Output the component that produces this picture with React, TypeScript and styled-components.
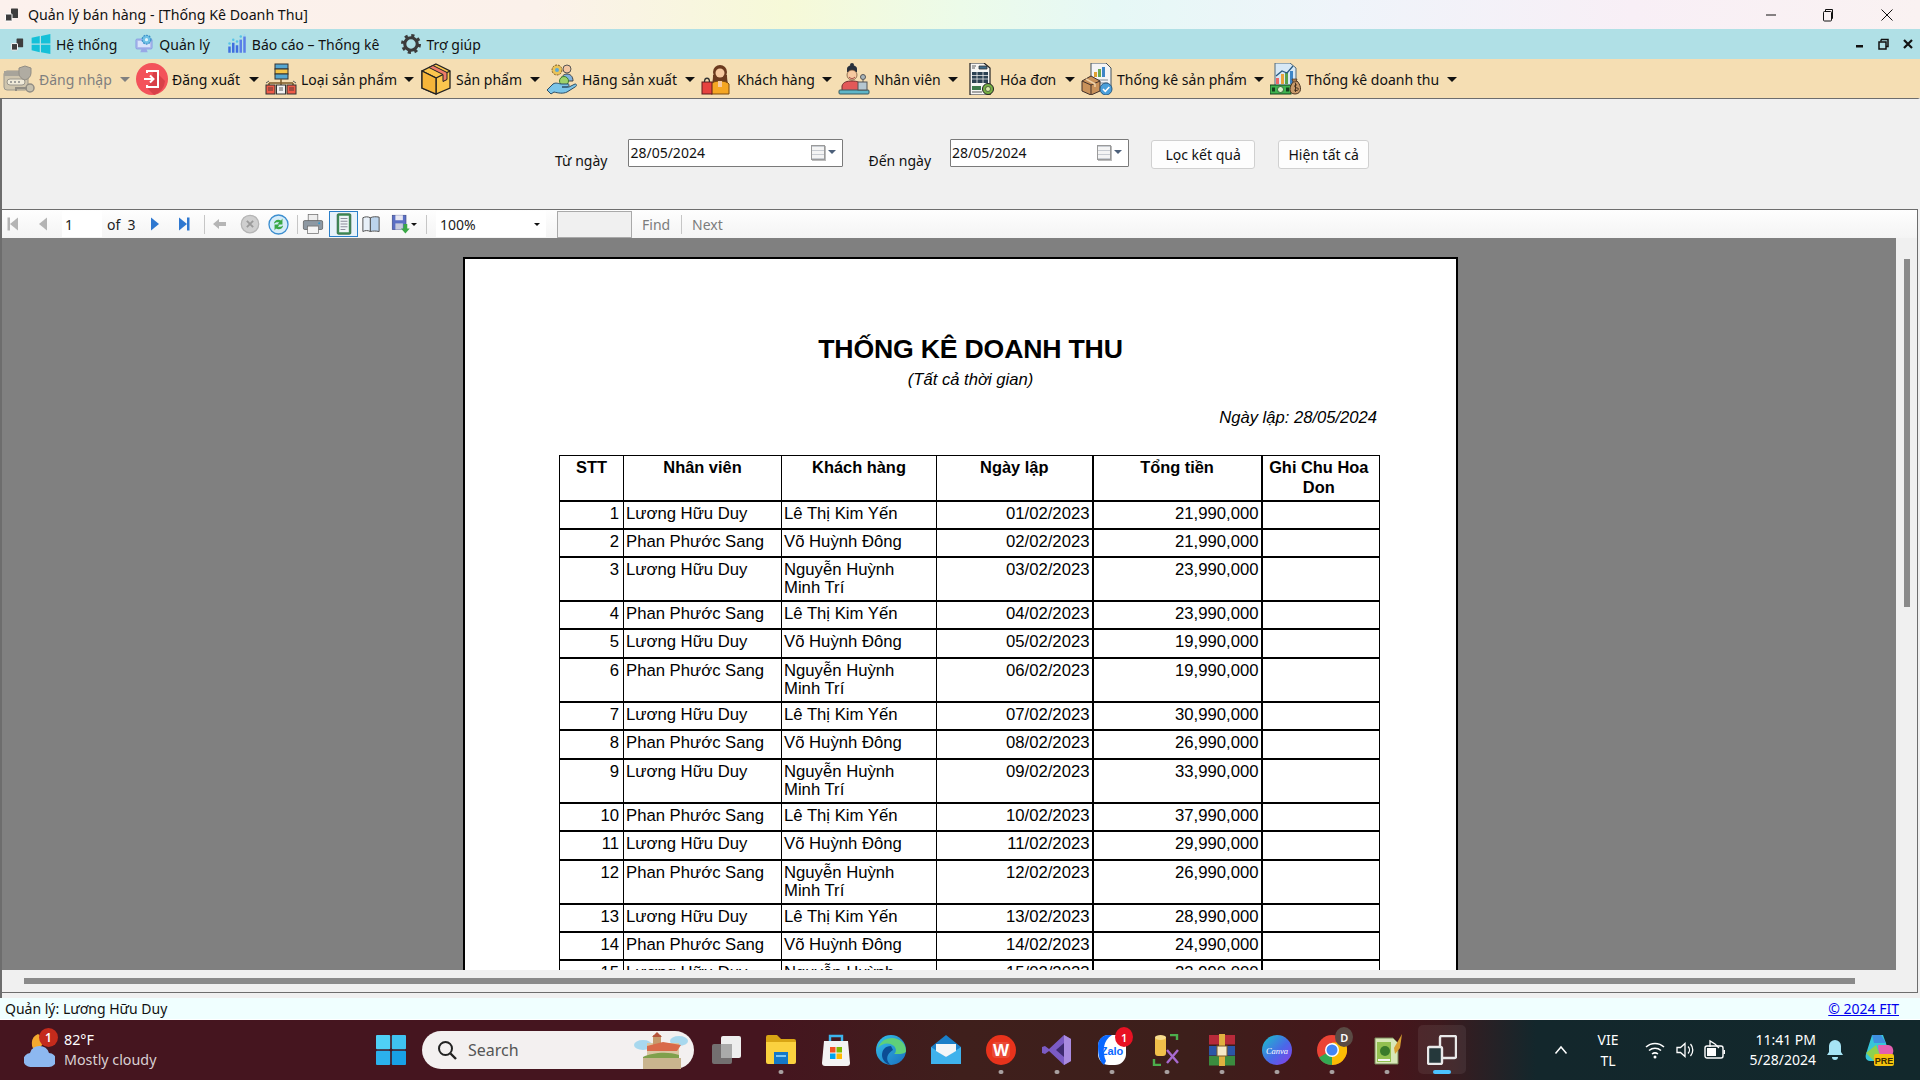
import React from "react";
import styled, { createGlobalStyle } from "styled-components";

const Global = createGlobalStyle`
  html, body { margin: 0; padding: 0; width: 1920px; height: 1080px; overflow: hidden; background: #f0f0f0; }
  #root { width: 1920px; height: 1080px; }
  * { box-sizing: border-box; }
`;

const UI = `"Noto Sans", "Open Sans", sans-serif`;
const Win = styled.div`width:1920px;height:1080px;display:flex;flex-direction:column;font-family:${UI};color:#111;overflow:hidden;`;

const TitleBar = styled.div`height:29px;flex:none;display:flex;align-items:center;padding:0 2px 0 4px;font-size:14.2px;
  background:linear-gradient(90deg,#fcf1ed 0%,#fbf1ea 28%,#f6f9d8 41%,#ecfbe9 50%,#e6f8f6 58%,#eff4fa 70%,#f8eff6 85%,#faf2f2 100%);`;
const TitleText = styled.span`margin-left:8px;flex:1;`;
const WinBtn = styled.span<{ $w: number }>`width:${p => p.$w}px;height:29px;display:flex;align-items:center;justify-content:center;`;

const MenuBar = styled.div`height:30px;flex:none;background:#b0e0e6;display:flex;align-items:center;padding-left:10px;font-size:14px;`;
const MenuItem = styled.div<{ $ml: number }>`display:flex;align-items:center;gap:5px;margin-left:${p => p.$ml}px;`;
const MenuRight = styled.div`margin-left:auto;display:flex;align-items:center;gap:14px;padding-right:7px;`;

const ToolBar = styled.div`height:39px;flex:none;background:#f5deb3;display:flex;align-items:center;padding-left:3px;font-size:14px;`;
const Tool = styled.div<{ $w: number; $off?: boolean }>`width:${p => p.$w}px;flex:none;display:flex;align-items:center;gap:4px;padding-right:6px;color:${p => p.$off ? "#7f7f7f" : "#111"};`;
const ToolIcon = styled.span`width:32px;height:34px;flex:none;display:flex;align-items:center;justify-content:center;`;
const ToolLabel = styled.span`flex:1;white-space:nowrap;padding-top:2px;`;
const Caret = styled.i<{ $off?: boolean }>`width:0;height:0;flex:none;margin-top:1px;border-left:5px solid transparent;border-right:5px solid transparent;border-top:5px solid ${p => p.$off ? "#808080" : "#111"};`;

const Client = styled.div`flex:1;min-height:0;display:flex;flex-direction:column;border-top:1px solid #6d6d6d;border-left:2px solid #6d6d6d;border-right:2px solid #f0f0f0;background:#f0f0f0;`;
const FilterPanel = styled.div`height:110px;flex:none;display:flex;align-items:flex-start;padding:0 0 0 553px;font-size:14px;`;
const FieldLabel = styled.span<{ $ml: number }>`margin:52px 0 0 ${p => p.$ml}px;white-space:nowrap;`;
const DateBox = styled.div<{ $w: number; $ml: number }>`width:${p => p.$w}px;height:28px;margin:40px 0 0 ${p => p.$ml}px;background:#fff;border:1px solid #7a7a7a;border-radius:1px;display:flex;align-items:center;padding:0 6px 2px 1px;font-size:14px;justify-content:space-between;`;
const DateDrop = styled.span`display:flex;align-items:center;gap:3px;`;
const CalIcon = styled.span`width:14px;height:15px;border:1px solid #9a9a9a;background:repeating-linear-gradient(0deg,#c8ccd2 0 1px,#f4f4f4 1px 4px);box-shadow:1px 1px 0 #bbb;display:block;`;
const DropCaret = styled.i`width:0;height:0;border-left:4px solid transparent;border-right:4px solid transparent;border-top:4px solid #4c607a;`;
const FormButton = styled.button<{ $w: number; $ml: number }>`width:${p => p.$w}px;height:29px;margin:41px 0 0 ${p => p.$ml}px;background:#fdfdfd;border:1px solid #d0d0d0;border-radius:3px;font:14px ${UI};color:#111;padding:0;`;

const Viewer = styled.div`flex:1;min-height:0;display:flex;flex-direction:column;border-top:1px solid #6d6d6d;border-right:1px solid #6d6d6d;border-bottom:1px solid #6d6d6d;`;
const ReportBar = styled.div`height:28px;flex:none;display:flex;align-items:center;background:linear-gradient(180deg,#fefefe,#f4f4f4);font-size:14px;color:#222;`;
const RBtn = styled.span<{ $w: number; $ml?: number; $on?: boolean }>`width:${p => p.$w}px;height:26px;flex:none;margin-left:${p => p.$ml ?? 0}px;display:flex;align-items:center;justify-content:center;${p => p.$on ? "border:1px solid #2a7fc9;background:#e8f2fa;" : ""}`;
const RSep = styled.span<{ $ml: number }>`width:1px;height:19px;flex:none;background:#c6c6c6;margin-left:${p => p.$ml}px;`;
const PageInput = styled.span`width:40px;height:26px;margin-left:2px;background:#fff;display:flex;align-items:center;padding-left:3px;flex:none;`;
const OfText = styled.span`width:36px;margin-left:5px;flex:none;white-space:pre;`;
const ZoomSelect = styled.span`width:110px;height:26px;margin-left:9px;background:#fff;display:flex;align-items:center;justify-content:space-between;padding:0 6px 0 4px;flex:none;`;
const SmallCaret = styled.i`width:0;height:0;border-left:3px solid transparent;border-right:3px solid transparent;border-top:3px solid #111;`;
const FindInput = styled.span`width:75px;height:27px;margin-left:11px;background:#f0f0f0;border:1px solid #a9a9a9;flex:none;`;
const FindLink = styled.span<{ $w?: number }>`color:#7c7c7c;margin-left:10px;${p => p.$w ? `width:${p.$w}px;` : ""}flex:none;`;

const ViewBody = styled.div`flex:1;min-height:0;display:flex;`;
const ViewMain = styled.div`flex:1;min-width:0;display:flex;flex-direction:column;`;
const Canvas = styled.div`flex:1;min-height:0;background:#808080;padding:19px 0 0 461px;overflow:hidden;`;
const VScroll = styled.div`width:21px;flex:none;background:#f0f0f0;padding:21px 7px 0 8px;`;
const VThumb = styled.div`width:6px;height:348px;background:#8a8a8a;`;
const HScroll = styled.div`height:22px;flex:none;background:#f0f0f0;padding:8px 0 0 22px;`;
const HThumb = styled.div`width:1831px;height:6px;background:#8a8a8a;`;

const Page = styled.div`width:995px;min-height:900px;background:#fff;border:2px solid #000;border-bottom:0;padding-top:74px;font-family:"Liberation Sans",Arial,sans-serif;color:#000;`;
const ReportTitle = styled.div`text-align:center;font-weight:700;font-size:26.67px;line-height:32px;padding-left:20px;letter-spacing:-.2px;`;
const ReportSub = styled.div`text-align:center;font-style:italic;font-size:16.6px;line-height:20px;margin-top:5px;padding-left:20px;`;
const ReportDate = styled.div`text-align:right;font-style:italic;font-size:16.6px;line-height:20px;margin-top:18px;padding-right:79px;`;
const Table = styled.table`table-layout:fixed;width:820px;margin:27px 0 0 94px;border-collapse:collapse;font-size:16.7px;line-height:18.5px;
  th,td{border:1px solid #000;border-top-width:2px;border-bottom-width:2px;vertical-align:top;padding:3px 2px 0 2px;overflow:hidden;}
  td:first-child{padding-right:4px;}
  td:nth-child(3){padding-right:12px;}
  th{font-weight:700;font-size:16.4px;text-align:center;padding-top:1px;line-height:20px;}
  th:last-child{padding:1px 4px 0 0;}
  td:nth-child(5),td:nth-child(6),th:nth-child(5),th:nth-child(6){border-left-width:2px;}
  thead tr{height:45px;}
  thead th{border-top-width:1px;}
  tbody tr:nth-child(3n+1){height:28px;}
  tbody tr:nth-child(3n+2){height:29px;}
  tbody tr:nth-child(12n+2){height:28px;}
  tbody tr:nth-child(3n){height:44px;}
`;
const NumCell = styled.td`text-align:right;`;

const Gap = styled.div`height:5px;flex:none;background:#f0f0f0;`;
const Status = styled.div`height:22px;flex:none;background:#f0ffff;display:flex;align-items:center;justify-content:space-between;padding:0 21px 0 5px;font-size:14px;border-bottom:1px solid #fff;`;
const StatusLink = styled.a`color:#0000ee;text-decoration:underline;`;

const Taskbar = styled.div`height:60px;flex:none;display:flex;align-items:center;position:relative;font-family:${UI};color:#fff;
  background:linear-gradient(90deg,#45151f 0%,#45151f 40%,#3f1f1c 50%,#3d1f1b 62%,#47151b 72%,#3d1a1e 75%,#13272c 80%,#12282c 100%);`;
const Weather = styled.div`width:376px;flex:none;display:flex;align-items:center;padding-left:24px;gap:9px;`;
const WeatherIcon = styled.span`position:relative;width:31px;height:38px;display:block;flex:none;`;
const Badge = styled.span<{ $bg: string }>`position:absolute;background:${p => p.$bg};color:#fff;border-radius:50%;width:19px;height:19px;font-size:12px;display:flex;align-items:center;justify-content:center;font-weight:600;`;
const WeatherBadge = styled(Badge)`top:-3px;left:15px;`;
const WeatherText = styled.div`font-size:14.3px;line-height:20px;color:#fff;`;
const WeatherSub = styled.div`color:#d9cfd2;`;
const StartBtn = styled.span`width:30px;height:30px;flex:none;`;
const SearchBox = styled.div`width:272px;height:38px;margin-left:16px;flex:none;background:#f3f0f0;border-radius:19px;display:flex;align-items:center;padding:0 5px 0 15px;color:#555;font-size:16px;gap:11px;`;
const SearchArt = styled.span`margin-left:auto;display:flex;`;
const AppRow = styled.div`display:flex;margin-left:4.5px;flex:none;`;
const AppCell = styled.div<{ $active?: boolean }>`width:55.08px;height:60px;flex:none;position:relative;display:flex;align-items:center;justify-content:center;`;
const ActiveBg = styled.span`position:absolute;left:3.5px;top:5px;width:48px;height:49px;background:rgba(255,255,255,.07);border-radius:5px;`;
const Dot = styled.span<{ $active?: boolean }>`position:absolute;bottom:6px;left:50%;transform:translateX(-50%);height:4px;border-radius:2px;width:${p => p.$active ? 18 : 5}px;background:${p => p.$active ? "#4cc2ff" : "#a8a0a0"};`;
const AppBadge = styled(Badge)`top:7px;left:31px;font-size:11px;width:18px;height:20px;`;
const Tray = styled.div`margin-left:auto;display:flex;align-items:center;height:60px;padding-right:24px;font-size:14px;`;
const TrayIcon = styled.span<{ $ml: number }>`margin-left:${p => p.$ml}px;display:flex;`;
const Lang = styled.div`width:40px;margin-left:20px;text-align:center;line-height:21px;font-size:14px;`;
const Clock = styled.div`width:78px;margin-left:12px;text-align:right;line-height:20px;font-size:14px;white-space:nowrap;`;

const I = ({ s = 32, children }: { s?: number; children: React.ReactNode }) => (
  <svg width={s} height={s} viewBox="0 0 32 32">{children}</svg>
);

const AppGlyph = ({ s = 16 }: { s?: number }) => (
  <I s={s}><rect x="14" y="3" width="14" height="19" rx="1" fill="#3d3d3d" /><rect x="3" y="14" width="13" height="14" rx="1" fill="#3d3d3d" stroke="#fff" strokeWidth="2" /></I>
);
const WinMenu = () => (
  <I s={20}><polygon points="1,6 14,3 14,15 1,15" fill="#14c0d8" /><polygon points="16,3 31,0 31,15 16,15" fill="#14c0d8" /><polygon points="1,17 14,17 14,29 1,26" fill="#14c0d8" /><polygon points="16,17 31,17 31,32 16,29" fill="#14c0d8" /></I>
);
const QuanLyIc = () => (
  <I s={20}><rect x="3" y="8" width="26" height="16" rx="2" fill="#a9b6ea" stroke="#7a8fe0" /><rect x="6" y="11" width="20" height="10" fill="#d9e4fb" /><circle cx="20" cy="9" r="7" fill="#6fc1e6" stroke="#3c92c9" strokeDasharray="3 1.5" strokeWidth="2" /><circle cx="20" cy="9" r="2.5" fill="#e2f4fb" /><path d="M12 24h8l2 5H10z" fill="#98a8e6" /></I>
);
const ChartIc = () => (
  <I s={20}>{[[2, 20, 10], [8, 14, 16], [14, 18, 12], [20, 9, 21], [26, 4, 26]].map(([x, y, h]) => <rect key={x} x={x} y={y} width="4" height={h} fill={x > 18 ? "#5a7fe8" : "#3f6fe0"} />)}<circle cx="4" cy="15" r="2" fill="#56c4e8" /><circle cx="10" cy="9" r="2" fill="#56c4e8" /><circle cx="16" cy="12" r="2" fill="#56c4e8" /><circle cx="22" cy="4" r="2" fill="#56c4e8" /><circle cx="28" cy="1.5" r="1.5" fill="#9fd6f2" /></I>
);
const GearIc = () => (
  <I s={20}><circle cx="16" cy="16" r="10" fill="none" stroke="#3b3b3b" strokeWidth="5" /><circle cx="16" cy="16" r="13.5" fill="none" stroke="#3b3b3b" strokeWidth="5" strokeDasharray="5 5.6" /></I>
);

const LoginIc = () => (
  <I><rect x="1" y="8" width="24" height="19" rx="3" fill="#cfc5ae" stroke="#9a968c" /><rect x="1" y="8" width="24" height="5" fill="#a8a49a" /><rect x="4" y="16" width="18" height="6" rx="3" fill="#f0ead9" stroke="#9a968c" /><circle cx="8" cy="19" r="1" fill="#888" /><circle cx="12" cy="19" r="1" fill="#888" /><circle cx="16" cy="19" r="1" fill="#888" /><path d="M22 3l6 2v5c0 4-3 6-6 7-3-1-6-3-6-7V5z" fill="#b0aca2" stroke="#918d84" /><circle cx="27" cy="25" r="4" fill="#c6c0ae" stroke="#918d84" strokeWidth="1.5" /><path d="M24 25H13v3" fill="none" stroke="#918d84" strokeWidth="2" /></I>
);
const LogoutIc = () => (
  <I><circle cx="16" cy="16" r="16" fill="#f3525a" /><path d="M18 7L29 18A16 16 0 0 1 18 32L12 26z" fill="#d84048" /><path d="M11 10V8h11v16H11v-2" fill="none" stroke="#fff" strokeWidth="2" /><path d="M8 16h9M14 12.5l3.5 3.5-3.5 3.5" fill="none" stroke="#fff" strokeWidth="2" /></I>
);
const CatIc = () => (
  <I><rect x="10" y="1" width="13" height="5" fill="#55a6d0" stroke="#333" /><rect x="10" y="6" width="13" height="5" fill="#f4c54a" stroke="#333" /><rect x="10" y="11" width="13" height="5" fill="#55a6d0" stroke="#333" /><path d="M16 16v4M4 20h24M4 20v2M16 20v2M28 20v2" stroke="#7b5a2a" strokeWidth="1.5" fill="none" /><path d="M1 20l3-2M31 20l-3-2" stroke="#555" /><rect x="1" y="22" width="9" height="9" fill="#ef5b48" stroke="#333" /><rect x="11.5" y="22" width="9" height="9" fill="#f1f1f1" stroke="#333" /><rect x="22" y="22" width="9" height="9" fill="#ef5b48" stroke="#333" /><path d="M3 25h5M3 27h5M14 25h4M14 27h4M24 25h5M24 27h5" stroke="#333" strokeWidth=".8" /></I>
);
const BoxIc = () => (
  <I><path d="M16 1l14 7v17l-14 6-14-6V8z" fill="#fbc64e" stroke="#222" strokeWidth="1.3" /><path d="M2 8l14 7 14-7M16 15v16" fill="none" stroke="#222" strokeWidth="1.3" /><path d="M2 8l14 7v16l-14-6z" fill="#f5b53a" stroke="#222" strokeWidth="1.3" /><path d="M9 4.5l14 7v7l4-2v-7L13 2.5z" fill="#ef7b6a" stroke="#222" /></I>
);
const BrandIc = () => (
  <I><circle cx="11" cy="7" r="5" fill="#e9c358" stroke="#7b5a2a" strokeDasharray="2 1" /><circle cx="11" cy="7" r="2" fill="#5aa9d8" /><circle cx="21" cy="6" r="4" fill="#f3c6a2" stroke="#555" /><path d="M15 18c0-5 3-7 6-7s6 2 6 7z" fill="#7fb2de" stroke="#444" /><circle cx="18" cy="18" r="4.5" fill="#9ed26a" stroke="#3b7d2e" /><path d="M1 27l6-6c3-2 6 0 9 0h6c2 0 1 3-1 3h-5 7l6-3c2 0 2 2 0 3l-8 5c-4 2-9 1-13 0l-3 2z" fill="#7bc5e8" stroke="#2c4d64" /></I>
);
const CustomerIc = () => (
  <I><circle cx="19" cy="9" r="7" fill="#6b3a1f" /><path d="M12 12c0 6-1 8-1 8h16s-1-3-1-8z" fill="#6b3a1f" /><circle cx="19" cy="10" r="4.5" fill="#f6c9a0" /><path d="M10 31V21c3-4 15-4 18 0v10z" fill="#f5a623" stroke="#7b4b12" /><path d="M17 18h4v6h-4z" fill="#f6c9a0" /><rect x="1" y="19" width="10" height="12" fill="#e6433f" stroke="#5c1d1d" /><path d="M3.5 19c0-5 5-5 5 0" fill="none" stroke="#333" strokeWidth="1.3" /></I>
);
const StaffIc = () => (
  <I><path d="M9 6c0-5 10-5 10 0v3H9z" fill="#28303c" /><circle cx="14" cy="2" r="2" fill="#28303c" /><circle cx="14" cy="12" r="5" fill="#f6c9a0" stroke="#6a4a2e" strokeWidth=".7" /><path d="M11 14c2 2 4 2 6 0" stroke="#9c3a3a" fill="none" /><path d="M4 28v-5c1-4 5-5 10-5s8 1 9 5v5z" fill="#e25858" stroke="#6b2c2c" /><rect x="1" y="27" width="30" height="4" rx="1" fill="#5fb6c8" stroke="#3b5a60" /><rect x="20" y="19" width="9" height="8" fill="#b6c7d0" stroke="#555" /><circle cx="25" cy="14" r="2.5" fill="#a8b5bb" stroke="#555" /><path d="M25 17v2" stroke="#555" /></I>
);
const InvoiceIc = () => (
  <I><path d="M6 0h14l6 5v27H6z" fill="#f6f6f4" stroke="#222" strokeWidth="1.2" /><path d="M8 3h4M8 5h3M15 3h8v3h-8z" stroke="#333" fill="#3d6b8a" strokeWidth=".8" /><rect x="8" y="9" width="16" height="11" fill="#2c4252" /><path d="M8 12.5h16M8 16h16M13 9v11M19 9v11" stroke="#e8e8e8" strokeWidth=".8" /><rect x="8" y="23" width="9" height="4" fill="#3d7a4c" /><path d="M8 29h10" stroke="#555" /><circle cx="24" cy="26" r="5.5" fill="#76b043" stroke="#222" /><circle cx="24" cy="26" r="2.5" fill="#d7eaa8" stroke="#222" strokeWidth=".6" /></I>
);
const StatProdIc = () => (
  <I><path d="M10 0h15l5 5v20H10z" fill="#f4f4f4" stroke="#40505c" /><rect x="13" y="9" width="3" height="5" fill="#e0a030" /><rect x="17" y="6" width="3" height="8" fill="#6aa84f" /><rect x="21" y="4" width="3" height="10" fill="#3d85c6" /><path d="M13 17h14M13 20h14" stroke="#7c8a93" strokeWidth="1.2" /><path d="M1 18l9-5 9 5v10l-9 4-9-4z" fill="#c9925b" stroke="#40302a" /><path d="M1 18l9 4 9-4M10 22v10" fill="none" stroke="#40302a" /><path d="M5 16l9 5v3" fill="none" stroke="#eed1a8" strokeWidth="1.5" /><circle cx="25" cy="26" r="6" fill="#4a9fda" stroke="#2a5a80" /><path d="M22 26l2.3 2.3 4-4.3" fill="none" stroke="#fff" strokeWidth="1.5" /></I>
);
const StatRevIc = () => (
  <I><path d="M5 0h15l6 5v18H5z" fill="#d7e8f5" stroke="#516878" /><rect x="6" y="15" width="3" height="6" fill="#e66" /><rect x="11" y="11" width="3" height="10" fill="#e8a33a" /><rect x="15" y="9" width="3" height="12" fill="#5aa04a" /><rect x="20" y="8" width="3" height="13" fill="#3d85c6" /><path d="M6 13l6-5 5 2 6-7" fill="none" stroke="#2a5a80" strokeWidth="1.3" /><rect x="0" y="22" width="21" height="9" fill="#3fb34f" stroke="#14401d" /><circle cx="10.5" cy="26.5" r="3" fill="#d5f0c5" stroke="#14401d" strokeWidth=".7" /><rect x="2" y="24.5" width="3" height="4" fill="#14401d" /><rect x="16" y="24.5" width="3" height="4" fill="#14401d" /><path d="M24 18c-5 5-6 13 1 13s7-8 2-13z" fill="#c89a6a" stroke="#4a3423" /><path d="M22 16h5l-1 3h-3z" fill="#a67a4c" stroke="#4a3423" strokeWidth=".7" /><path d="M27 22c-3-1-3 3 0 3s1 4-3 2M25.5 20v9" fill="none" stroke="#3a2818" strokeWidth=".9" /></I>
);

const Tri = ({ dir, c, bar }: { dir: "l" | "r"; c: string; bar?: boolean }) => (
  <I s={16}>{dir === "l"
    ? <><polygon points="24,3 8,16 24,29" fill={c} />{bar && <rect x="3" y="3" width="5" height="26" fill={c} />}</>
    : <><polygon points="8,3 24,16 8,29" fill={c} />{bar && <rect x="24" y="3" width="5" height="26" fill={c} />}</>}
  </I>
);
const BackIc = () => <I s={16}><path d="M2 16L14 6v6h14v8H14v6z" fill="#b5b5b5" /></I>;
const StopIc = () => <I s={20}><circle cx="16" cy="16" r="14" fill="#cfcfcf" stroke="#b5b5b5" strokeWidth="2" /><path d="M11 11l10 10M21 11L11 21" stroke="#9a9a9a" strokeWidth="3" /></I>;
const RefreshIc = () => <I s={21}><circle cx="16" cy="16" r="14.5" fill="#d6ecf9" stroke="#3d8fd0" strokeWidth="2" /><path d="M9 15c0-5 6-8 11-5l2-3v9h-8l3-3c-3-1-6 0-8 2z" fill="#3aa845" /><path d="M23 17c0 5-6 8-11 5l-2 3v-9h8l-3 3c3 1 6 0 8-2z" fill="#3aa845" /></I>;
const PrintIc = () => <I s={22}><rect x="9" y="2" width="14" height="10" fill="#eee" stroke="#666" /><rect x="2" y="11" width="28" height="13" rx="2" fill="#8d98a2" stroke="#555" /><rect x="8" y="19" width="16" height="11" fill="#f4f4f4" stroke="#666" /><circle cx="25" cy="15" r="1.5" fill="#39c" /></I>;
const LayoutIc = () => <I s={22}><rect x="6" y="1" width="20" height="30" rx="2" fill="#3f8a55" stroke="#2b5e3a" /><rect x="9" y="4" width="14" height="24" fill="#eef4f6" /><path d="M11 8h10M11 12h10M11 16h10M11 20h10M11 24h7" stroke="#889" strokeWidth="1.4" /></I>;
const PagesIc = () => <I s={20}><path d="M3 6c4-2 8-2 12 0v22c-4-2-8-2-12 0z" fill="#e8f0f8" stroke="#555" strokeWidth="1.6" /><path d="M15 6c4-2 9-2 14-1v23c-5-1-10-1-14 0z" fill="#bcd4ec" stroke="#555" strokeWidth="1.6" /></I>;
const SaveIc = () => <I s={20}><rect x="2" y="2" width="22" height="23" fill="#5b6fc4" stroke="#3a4785" /><rect x="7" y="2" width="12" height="8" fill="#e8e8f2" /><rect x="7" y="15" width="12" height="10" fill="#c7cbdd" /><path d="M20 16v7h-4l7 8 7-8h-4v-7z" fill="#3aa845" /></I>;

const StartIc = () => (
  <svg width="30" height="30" viewBox="0 0 30 30"><rect x="0" y="0" width="14.2" height="14.2" rx="1" fill="#4fd0f5" /><rect x="15.8" y="0" width="14.2" height="14.2" rx="1" fill="#3fc2f0" /><rect x="0" y="15.8" width="14.2" height="14.2" rx="1" fill="#2bb1ec" /><rect x="15.8" y="15.8" width="14.2" height="14.2" rx="1" fill="#18a0e6" /></svg>
);
const MagIc = () => <svg width="20" height="20" viewBox="0 0 20 20"><circle cx="8.5" cy="8.5" r="6.5" fill="none" stroke="#222" strokeWidth="2" /><path d="M13.5 13.5L19 19" stroke="#222" strokeWidth="2.4" /></svg>;
const CastleIc = () => (
  <svg width="56" height="38" viewBox="0 0 56 38"><ellipse cx="10" cy="14" rx="9" ry="5" fill="#a8d8ee" /><ellipse cx="46" cy="10" rx="9" ry="5" fill="#a8d8ee" /><rect x="14" y="12" width="32" height="26" fill="#d9c7a3" /><rect x="20" y="4" width="8" height="14" fill="#c79a6c" /><path d="M19 6l5-5 5 5z" fill="#b5533a" /><path d="M14 15l16-4 18 3-4 6H14z" fill="#d96a4a" /><path d="M10 26c8-4 24-6 36-2v3H10z" fill="#7fa04c" /><rect x="10" y="27" width="38" height="11" fill="#c9b48e" /></svg>
);
const TaskViewIc = () => <svg width="30" height="30" viewBox="0 0 30 30"><rect x="10" y="1" width="20" height="22" rx="2" fill="#eee" /><rect x="1" y="9" width="20" height="20" rx="2" fill="#777" opacity=".92" /><rect x="10" y="9" width="11" height="14" fill="#aaa" /></svg>;
const ExplorerIc = () => <svg width="30" height="32" viewBox="0 0 30 32"><path d="M0 3a2 2 0 0 1 2-2h9l4 4h13a2 2 0 0 1 2 2v4H0z" fill="#d9a514" /><path d="M0 8h30v20a2 2 0 0 1-2 2H2a2 2 0 0 1-2-2z" fill="#fbd13f" /><rect x="8" y="18" width="14" height="12" fill="#1478c8" /><rect x="10" y="21" width="10" height="2" fill="#7cc8f5" /></svg>;
const StoreIc = () => <svg width="30" height="34" viewBox="0 0 30 34"><path d="M9 8V3h12v5" fill="none" stroke="#3cb4ec" strokeWidth="2.4" /><path d="M3 8h24l2 22a3 3 0 0 1-3 3H4a3 3 0 0 1-3-3z" fill="#f3f3f3" /><rect x="9" y="14" width="5.5" height="5.5" fill="#f25022" /><rect x="15.5" y="14" width="5.5" height="5.5" fill="#7fba00" /><rect x="9" y="20.5" width="5.5" height="5.5" fill="#00a4ef" /><rect x="15.5" y="20.5" width="5.5" height="5.5" fill="#ffb900" /></svg>;
const EdgeIc = () => <svg width="32" height="32" viewBox="0 0 32 32"><defs><linearGradient id="eg" x1="0" y1="0" x2="1" y2="1"><stop offset="0" stopColor="#35c1e8" /><stop offset="1" stopColor="#1a6fc0" /></linearGradient></defs><circle cx="16" cy="16" r="15" fill="url(#eg)" /><path d="M31 17c0-8-7-13-14-13C10 4 5 8 3 14c4-5 11-6 16-2 3 3 2 7 0 8h5c4 0 7-1 7-3z" fill="#5fd07a" /><path d="M16 12c-6 0-9 4-9 9 0 5 4 9 9 10-3-2-5-6-3-10 1-2 3-4 5-5z" fill="#0c4d94" /></svg>;
const MailIc = () => <svg width="30" height="32" viewBox="0 0 30 32"><path d="M15 1L30 13v17H0V13z" fill="#1a7fc9" /><path d="M0 13l15 10 15-10v17H0z" fill="#3fb2ec" /><path d="M5 10h20v7l-10 6-10-6z" fill="#f2f6f8" /></svg>;
const WpsIc = () => <svg width="30" height="30" viewBox="0 0 30 30"><circle cx="15" cy="15" r="15" fill="#e8331c" /><rect x="6" y="7" width="18" height="16" rx="4" fill="#fff" opacity=".12" /><text x="15" y="21" textAnchor="middle" fontSize="17" fontWeight="800" fill="#fff" fontFamily="Liberation Sans">W</text></svg>;
const VsIc = () => <svg width="30" height="32" viewBox="0 0 30 32"><path d="M22 1l7 4v22l-7 4L7 17l-4 3-3-1v-6l3-1 4 3z" fill="#7b5bc4" /><path d="M22 1l7 4v22l-7 4z" fill="#a98be0" /><path d="M22 9l-8 7 8 7z" fill="#3d2a70" /></svg>;
const ZaloIc = () => <svg width="30" height="32" viewBox="0 0 30 32"><rect x="1" y="1" width="28" height="30" rx="11" fill="#fff" /><path d="M1 12C1 5 6 1 11 1h4C6 6 5 18 9 27l-2 4c-4-3-6-8-6-19z" fill="#0a68ff" /><text x="15" y="21" textAnchor="middle" fontSize="11" fontWeight="700" fill="#0a68ff" fontFamily="Liberation Sans">Zalo</text></svg>;
const ToolsIc = () => <svg width="30" height="32" viewBox="0 0 30 32"><rect x="3" y="2" width="11" height="20" rx="3" fill="#f0c04a" /><ellipse cx="8.500" cy="3.500" rx="5.500" ry="2.500" fill="#f7dc8e" /><path d="M18 1h7v5M2 25v6h7" fill="none" stroke="#4cae4c" strokeWidth="2.4" /><path d="M15 16l11 13M26 16L15 29" stroke="#a86ad0" strokeWidth="2.4" /></svg>;
const RarIc = () => <svg width="30" height="32" viewBox="0 0 30 32">{[["#b72a3a", 1], ["#2b56a8", 12], ["#3b8c3f", 22]].map(([c, y]) => <rect key={String(y)} x="2" y={Number(y)} width="26" height="9.500" fill={String(c)} />)}<rect x="12" y="0" width="6" height="32" fill="#e0b040" /><rect x="10" y="12" width="10" height="10" fill="#f5e9c8" stroke="#7a5a2a" /></svg>;
const CanvaIc = () => <svg width="30" height="32" viewBox="0 0 30 32"><defs><linearGradient id="cg" x1="0" y1="0" x2="1" y2="1"><stop offset="0" stopColor="#18c4c8" /><stop offset=".55" stopColor="#4a68e8" /><stop offset="1" stopColor="#8a3be8" /></linearGradient></defs><circle cx="15" cy="16" r="15" fill="url(#cg)" /><text x="15" y="20" textAnchor="middle" fontSize="8.500" fontStyle="italic" fill="#fff" fontFamily="Liberation Serif">Canva</text></svg>;
const ChromeIc = () => <svg width="30" height="30" viewBox="0 0 30 30"><circle cx="15" cy="15" r="15" fill="#ea4335" /><path d="M15 15L2 22.500A15 15 0 0 0 15 30z" fill="#34a853" /><path d="M15 15l0 15A15 15 0 0 0 28 7.500H15z" fill="#fbbc04" /><circle cx="15" cy="15" r="7" fill="#fff" /><circle cx="15" cy="15" r="5.500" fill="#4285f4" /></svg>;
const NotepadIc = () => <svg width="30" height="32" viewBox="0 0 30 32"><path d="M3 4h18l5 5v21H3z" fill="#d8e8b8" stroke="#7a8a5a" /><path d="M5 8h14v20H5z" fill="#92c050" /><path d="M22 14L30 0l-2 14-5 6z" fill="#d8a030" /><circle cx="13" cy="17" r="5" fill="#3a7a2a" /><path d="M6 26h12" stroke="#f5f5f5" strokeWidth="2" /></svg>;
const AppTaskIc = () => <svg width="30" height="30" viewBox="0 0 30 30"><rect x="13" y="1" width="16" height="22" rx="1.500" fill="none" stroke="#e8e8e8" strokeWidth="2.400" /><rect x="1" y="12" width="14" height="17" rx="1.500" fill="#15292d" stroke="#e8e8e8" strokeWidth="2.400" /></svg>;

const CloudIc = () => <svg width="31" height="38" viewBox="0 0 31 38"><path d="M14 3a10 10 0 0 0-1 18 10 10 0 0 1-6-3 8 8 0 0 0 7-15z" fill="#f3a92f" /><path d="M7 36a7 7 0 0 1-1-14 10 10 0 0 1 19 0 7 7 0 0 1 0 14z" fill="#8db8f0" /></svg>;
const Chevron = () => <svg width="14" height="10" viewBox="0 0 14 10"><path d="M1.500 8.500L7 2l5.500 6.500" fill="none" stroke="#fff" strokeWidth="1.500" /></svg>;
const WifiIc = () => <svg width="20" height="20" viewBox="0 0 20 20"><path d="M1 7a13 13 0 0 1 18 0M4 10.500a9 9 0 0 1 12 0M7 14a5 5 0 0 1 6 0" fill="none" stroke="#fff" strokeWidth="1.500" /><circle cx="10" cy="17" r="1.500" fill="#fff" /></svg>;
const SpeakerIc = () => <svg width="20" height="20" viewBox="0 0 20 20"><path d="M2 7.500h3.500L10 3.500v13l-4.500-4H2z" fill="none" stroke="#fff" strokeWidth="1.300" /><path d="M13 6.500a5 5 0 0 1 0 7M15.500 4a9 9 0 0 1 0 12" fill="none" stroke="#fff" strokeWidth="1.300" /></svg>;
const BatteryIc = () => <svg width="22" height="22" viewBox="0 0 22 22"><rect x="1" y="7" width="18" height="12" rx="2" fill="none" stroke="#fff" strokeWidth="1.400" /><rect x="3" y="9" width="9" height="8" fill="#fff" /><path d="M6 8V2l5 3 4 4" fill="none" stroke="#fff" strokeWidth="1.300" /><rect x="19.500" y="11" width="1.500" height="4" fill="#fff" /></svg>;
const BellIc = () => <svg width="20" height="22" viewBox="0 0 20 22"><path d="M10 1a6 6 0 0 0-6 6v6l-2 3h16l-2-3V7a6 6 0 0 0-6-6z" fill="#a6e4f5" /><path d="M7 18a3 3 0 0 0 6 0z" fill="#a6e4f5" /></svg>;
const CopilotIc = () => <svg width="32" height="34" viewBox="0 0 32 34"><path d="M8 2h11l5 14-7 12H6c-4 0-5-4-4-7z" fill="#37c6d8" /><path d="M8 2h9l5 8H10z" fill="#3f8fe0" /><path d="M14 12h10c4 0 6 4 5 8l-3 8H15z" fill="#e35fb0" /><path d="M2 20l10-8 4 10-6 6z" fill="#8ed14f" /><rect x="10" y="21" width="20" height="12" rx="2" fill="#f4c20d" /><text x="20" y="30.500" textAnchor="middle" fontSize="9" fontWeight="700" fill="#3a2d00" fontFamily="Liberation Sans">PRE</text></svg>;
const WinMin = () => <svg width="12" height="12" viewBox="0 0 12 12"><path d="M1 6h10" stroke="#111" /></svg>;
const WinRestore = () => <svg width="12" height="14" viewBox="0 0 12 14"><rect x="1.500" y="3.500" width="8" height="9.500" rx="1" fill="none" stroke="#111" /><path d="M3.500 3.500V1.500h7v9h-1" fill="none" stroke="#111" /></svg>;
const WinClose = () => <svg width="14" height="14" viewBox="0 0 14 14"><path d="M1.500 1.500l11 11M12.500 1.500l-11 11" stroke="#111" /></svg>;
const MdiMin = () => <svg width="8" height="8" viewBox="0 0 8 8"><rect x="0" y="5" width="7" height="2.500" fill="#111" /></svg>;
const MdiRestore = () => <svg width="11" height="12" viewBox="0 0 11 12"><path d="M3 1.500h7v7H8M3 1.500v2" fill="none" stroke="#111" strokeWidth="1.500" /><rect x="1" y="4" width="7" height="7" fill="none" stroke="#111" strokeWidth="1.500" /></svg>;
const MdiClose = () => <svg width="10" height="10" viewBox="0 0 10 10"><path d="M1 1l8 8M9 1L1 9" stroke="#111" strokeWidth="2.200" /></svg>;

const menus = [
  { ml: 6, icon: <WinMenu />, label: "Hệ thống" },
  { ml: 17, icon: <QuanLyIc />, label: "Quản lý" },
  { ml: 17, icon: <ChartIc />, label: "Báo cáo – Thống kê" },
  { ml: 22, icon: <GearIc />, label: "Trợ giúp" },
];
const tools = [
  { w: 133, off: true, icon: <LoginIc />, label: "Đăng nhập" },
  { w: 129, icon: <LogoutIc />, label: "Đăng xuất" },
  { w: 155, icon: <CatIc />, label: "Loại sản phẩm" },
  { w: 126, icon: <BoxIc />, label: "Sản phẩm" },
  { w: 155, icon: <BrandIc />, label: "Hãng sản xuất" },
  { w: 137, icon: <CustomerIc />, label: "Khách hàng" },
  { w: 126, icon: <StaffIc />, label: "Nhân viên" },
  { w: 117, icon: <InvoiceIc />, label: "Hóa đơn" },
  { w: 189, icon: <StatProdIc />, label: "Thống kê sản phẩm" },
  { w: 193, icon: <StatRevIc />, label: "Thống kê doanh thu" },
];
const names = ["Lương Hữu Duy", "Phan Phước Sang"];
const customers = ["Lê Thị Kim Yến", "Võ Huỳnh Đông", "Nguyễn Huỳnh Minh Trí"];
const totals = ["21,990,000", "21,990,000", "23,990,000", "23,990,000", "19,990,000", "19,990,000", "30,990,000", "26,990,000", "33,990,000", "37,990,000", "29,990,000", "26,990,000", "28,990,000", "24,990,000", "23,990,000"];
const apps: { el: React.ReactNode; dot?: boolean; badge?: string; gray?: boolean; active?: boolean }[] = [
  { el: <ExplorerIc />, dot: true },
  { el: <StoreIc /> },
  { el: <EdgeIc /> },
  { el: <MailIc /> },
  { el: <WpsIc />, dot: true },
  { el: <VsIc />, dot: true },
  { el: <ZaloIc />, dot: true, badge: "1" },
  { el: <ToolsIc />, dot: true },
  { el: <RarIc />, dot: true },
  { el: <CanvaIc />, dot: true },
  { el: <ChromeIc />, dot: true, badge: "D", gray: true },
  { el: <NotepadIc />, dot: true },
  { el: <AppTaskIc />, active: true },
];

export default function App() {
  return (
    <Win>
      <Global />
      <TitleBar>
        <AppGlyph />
        <TitleText>Quản lý bán hàng - [Thống Kê Doanh Thu]</TitleText>
        <WinBtn $w={57}><WinMin /></WinBtn>
        <WinBtn $w={57}><WinRestore /></WinBtn>
        <WinBtn $w={62}><WinClose /></WinBtn>
      </TitleBar>
      <MenuBar>
        <AppGlyph s={15} />
        {menus.map(m => <MenuItem key={m.label} $ml={m.ml}>{m.icon}<span>{m.label}</span></MenuItem>)}
        <MenuRight><MdiMin /><MdiRestore /><MdiClose /></MenuRight>
      </MenuBar>
      <ToolBar>
        {tools.map(t => (
          <Tool key={t.label} $w={t.w} $off={t.off}>
            <ToolIcon>{t.icon}</ToolIcon>
            <ToolLabel>{t.label}</ToolLabel>
            <Caret $off={t.off} />
          </Tool>
        ))}
      </ToolBar>
      <Client>
        <FilterPanel>
          <FieldLabel $ml={0}>Từ ngày</FieldLabel>
          <DateBox $w={215} $ml={21}>28/05/2024<DateDrop><CalIcon /><DropCaret /></DateDrop></DateBox>
          <FieldLabel $ml={25}>Đến ngày</FieldLabel>
          <DateBox $w={179} $ml={19}>28/05/2024<DateDrop><CalIcon /><DropCaret /></DateDrop></DateBox>
          <FormButton $w={104} $ml={22}>Lọc kết quả</FormButton>
          <FormButton $w={91} $ml={23}>Hiện tất cả</FormButton>
        </FilterPanel>
        <Viewer>
          <ReportBar>
            <RBtn $w={24}><Tri dir="l" c="#b4b4b4" bar /></RBtn>
            <RBtn $w={34}><Tri dir="l" c="#b4b4b4" /></RBtn>
            <PageInput>1</PageInput>
            <OfText>of  3</OfText>
            <RBtn $w={24}><Tri dir="r" c="#2f78d0" /></RBtn>
            <RBtn $w={32}><Tri dir="r" c="#2f78d0" bar /></RBtn>
            <RSep $ml={5} />
            <RBtn $w={30}><BackIc /></RBtn>
            <RBtn $w={30}><StopIc /></RBtn>
            <RBtn $w={26}><RefreshIc /></RBtn>
            <RSep $ml={6} />
            <RBtn $w={30}><PrintIc /></RBtn>
            <RBtn $w={29} $ml={1} $on><LayoutIc /></RBtn>
            <RBtn $w={26}><PagesIc /></RBtn>
            <RBtn $w={28} $ml={6}><SaveIc /><SmallCaret /></RBtn>
            <RSep $ml={8} />
            <ZoomSelect>100%<SmallCaret /></ZoomSelect>
            <FindInput />
            <FindLink $w={29}>Find</FindLink>
            <RSep $ml={10} />
            <FindLink>Next</FindLink>
          </ReportBar>
          <ViewBody>
            <ViewMain>
              <Canvas>
                <Page>
                  <ReportTitle>THỐNG KÊ DOANH THU</ReportTitle>
                  <ReportSub>(Tất cả thời gian)</ReportSub>
                  <ReportDate>Ngày lập: 28/05/2024</ReportDate>
                  <Table>
                    <colgroup>
                      <col width="64" /><col width="158" /><col width="155" /><col width="156" /><col width="169" /><col width="118" />
                    </colgroup>
                    <thead>
                      <tr><th>STT</th><th>Nhân viên</th><th>Khách hàng</th><th>Ngày lập</th><th>Tổng tiền</th><th>Ghi Chu Hoa Don</th></tr>
                    </thead>
                    <tbody>
                      {totals.map((t, i) => (
                        <tr key={i}>
                          <NumCell>{i + 1}</NumCell>
                          <td>{names[i % 2]}</td>
                          <td>{customers[i % 3]}</td>
                          <NumCell>{String(i + 1).padStart(2, "0")}/02/2023</NumCell>
                          <NumCell>{t}</NumCell>
                          <td />
                        </tr>
                      ))}
                    </tbody>
                  </Table>
                </Page>
              </Canvas>
              <HScroll><HThumb /></HScroll>
            </ViewMain>
            <VScroll><VThumb /></VScroll>
          </ViewBody>
        </Viewer>
        <Gap />
      </Client>
      <Status>
        <span>Quản lý: Lương Hữu Duy</span>
        <StatusLink>© 2024 FIT</StatusLink>
      </Status>
      <Taskbar>
        <Weather>
          <WeatherIcon><CloudIc /><WeatherBadge $bg="#c42b1c">1</WeatherBadge></WeatherIcon>
          <WeatherText>82°F<WeatherSub>Mostly cloudy</WeatherSub></WeatherText>
        </Weather>
        <StartBtn><StartIc /></StartBtn>
        <SearchBox><MagIc /><span>Search</span><SearchArt><CastleIc /></SearchArt></SearchBox>
        <AppRow>
          <AppCell><TaskViewIc /></AppCell>
          {apps.map((a, i) => (
            <AppCell key={i}>
              {a.active && <ActiveBg />}
              {a.el}
              {a.badge && <AppBadge $bg={a.gray ? "#5a4a44" : "#e81123"}>{a.badge}</AppBadge>}
              {(a.dot || a.active) && <Dot $active={a.active} />}
            </AppCell>
          ))}
        </AppRow>
        <Tray>
          <Chevron />
          <Lang>VIE<br />TL</Lang>
          <TrayIcon $ml={17}><WifiIc /></TrayIcon>
          <TrayIcon $ml={10}><SpeakerIc /></TrayIcon>
          <TrayIcon $ml={9}><BatteryIc /></TrayIcon>
          <Clock>11:41 PM<br />5/28/2024</Clock>
          <TrayIcon $ml={9}><BellIc /></TrayIcon>
          <TrayIcon $ml={19}><CopilotIc /></TrayIcon>
        </Tray>
      </Taskbar>
    </Win>
  );
}
